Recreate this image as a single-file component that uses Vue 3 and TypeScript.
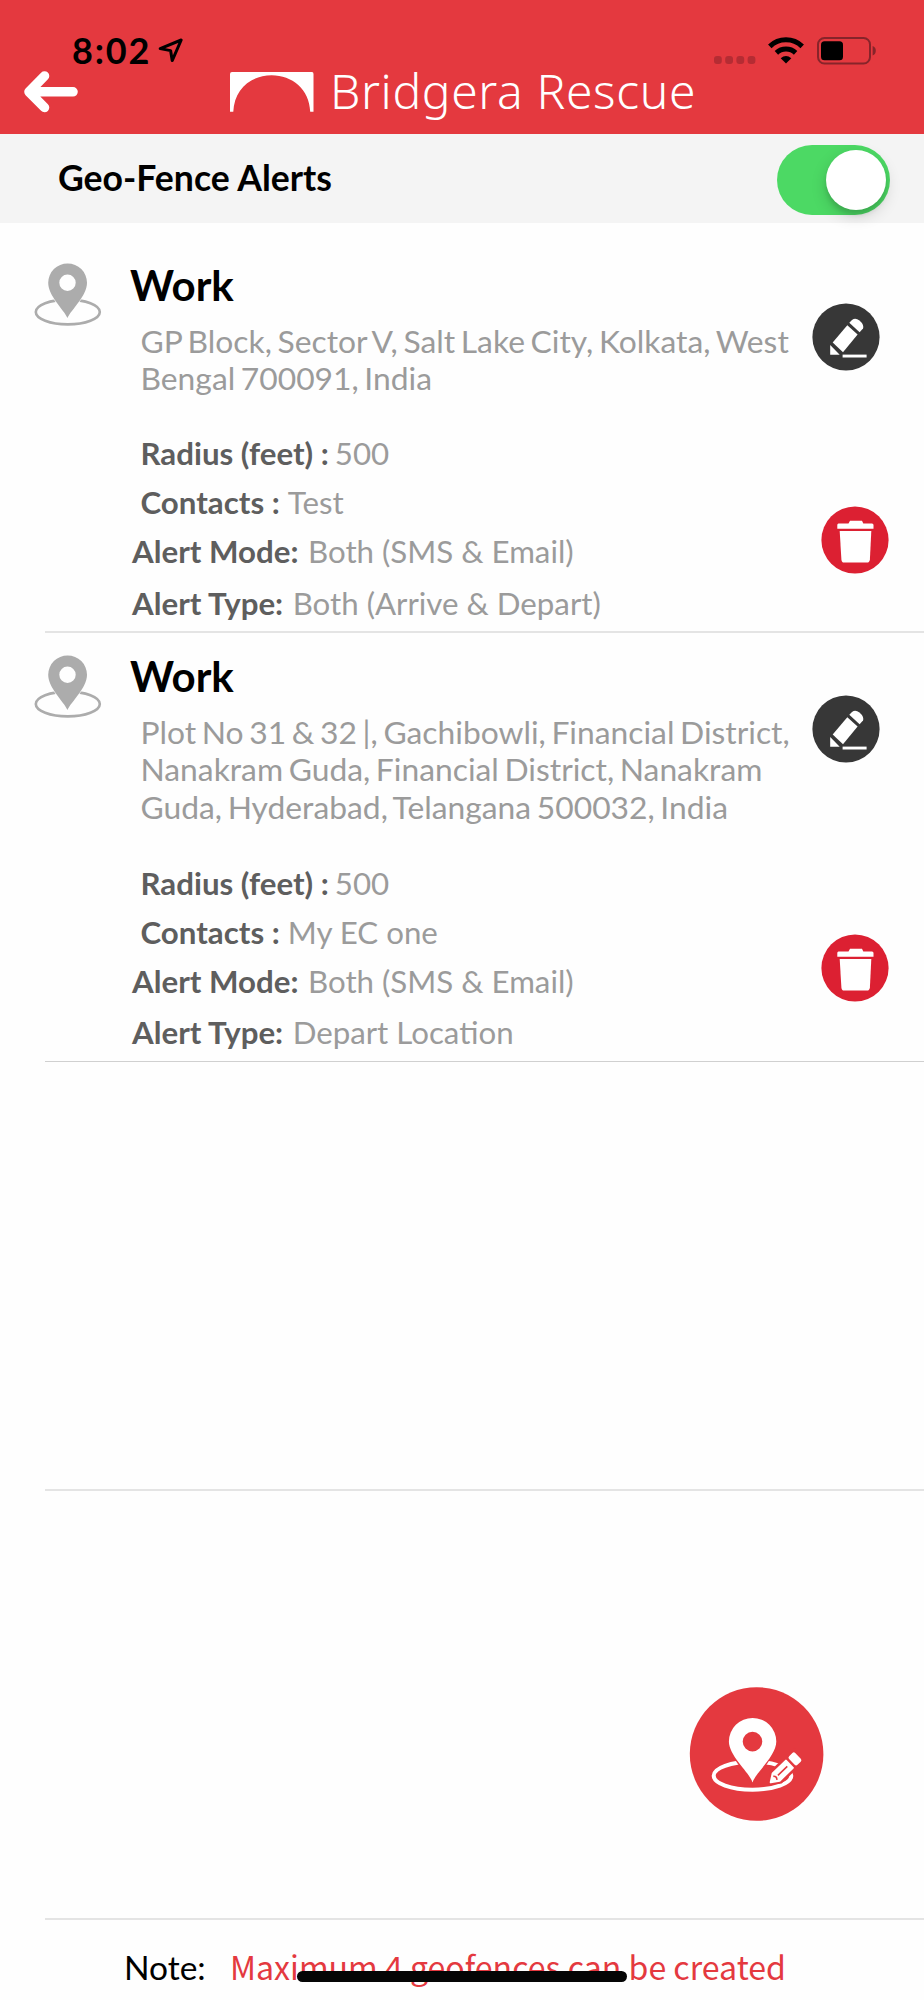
<script setup lang="ts">
import { ref } from 'vue'

interface Fence {
  name: string
  address: string[]
  radius: number
  contacts: string
  mode: string
  type: string
}

const alertsOn = ref(true)

const fences: Fence[] = [
  {
    name: 'Work',
    address: ['GP Block, Sector V, Salt Lake City, Kolkata, West', 'Bengal 700091, India'],
    radius: 500,
    contacts: 'Test',
    mode: 'Both (SMS & Email)',
    type: 'Both (Arrive & Depart)',
  },
  {
    name: 'Work',
    address: [
      'Plot No 31 & 32 |, Gachibowli, Financial District,',
      'Nanakram Guda, Financial District, Nanakram',
      'Guda, Hyderabad, Telangana 500032, India',
    ],
    radius: 500,
    contacts: 'My EC one',
    mode: 'Both (SMS & Email)',
    type: 'Depart Location',
  },
]
</script>

<template>
  <div class="screen">
    <header class="header">
      <div class="status">
        <span class="time">8:02</span>
        <svg class="loc" viewBox="0 0 26 25" width="26" height="25">
          <path d="M23.2 2 L2.2 10.6 L12.6 12.6 L14.2 22.6 Z" fill="none" stroke="#000" stroke-width="3" stroke-linejoin="round" />
        </svg>
        <svg class="dots" viewBox="0 0 42 8" width="42" height="8">
          <rect v-for="i in 4" :key="i" :x="(i - 1) * 11.2" y="0" width="7.8" height="8" rx="3" fill="#b52c33" />
        </svg>
        <svg class="wifi" viewBox="0 0 36 27" width="36" height="27">
          <path d="M1.8 9.4 A23.3 23.3 0 0 1 34.2 9.4" fill="none" stroke="#000" stroke-width="5" />
          <path d="M8.4 15.9 A14 14 0 0 1 27.6 15.9" fill="none" stroke="#000" stroke-width="5" />
          <path d="M18 26.4 L12.7 21.2 Q18 17 23.3 21.2 Z" fill="#000" />
        </svg>
        <svg class="battery" viewBox="0 0 60 28" width="60" height="28">
          <rect x="1" y="1" width="52" height="25.5" rx="6.5" fill="none" stroke="#87242a" stroke-width="2" />
          <path d="M55.6 9 Q58.8 10.2 58.8 13.7 Q58.8 17.2 55.6 18.4 Z" fill="#87242a" />
          <rect x="4" y="4.3" width="22" height="19" rx="3.5" fill="#000" />
        </svg>
      </div>
      <div class="nav">
        <svg class="back" viewBox="0 0 54 42" width="54" height="42">
          <path d="M20.5 5 L5 20.8 L20.5 36.5 M8 20.8 H49" fill="none" stroke="#fff" stroke-width="9.6" stroke-linecap="round" stroke-linejoin="round" />
        </svg>
        <svg class="bridge" viewBox="0 0 84 40" width="84" height="40">
          <path d="M2 0 H82 Q83.5 0 83.5 2 V39.8 H80.2 C79.5 17 62 3.2 41.7 3.2 C21 3.2 4.2 17 3.3 39.8 H0 V2 Q0 0 2 0 Z" fill="#fff" />
        </svg>
        <span class="brand">Bridgera Rescue</span>
      </div>
    </header>

    <section class="toggle-bar">
      <span class="toggle-label">Geo-Fence Alerts</span>
      <button class="switch" :class="{ on: alertsOn }" role="switch" :aria-checked="alertsOn" @click="alertsOn = !alertsOn">
        <span class="knob"></span>
      </button>
    </section>

    <main class="list">
      <article v-for="(f, n) in fences" :key="n" class="row" :class="'row-' + n">
        <svg class="pin" viewBox="0 0 68 64" width="68" height="64">
          <ellipse cx="33.8" cy="49" rx="32" ry="12.4" fill="none" stroke="#acacac" stroke-width="2.6" />
          <path d="M33.5 57 L17.6 33 H49.4 Z" fill="#fff" />
          <path fill-rule="evenodd" fill="#acacac" d="M33.5 55 C30 47 14.2 33 14.2 19.8 A19.4 19.4 0 0 1 53 19.8 C53 33 37 47 33.5 55 Z M33.5 11.6 A8.2 8.2 0 1 0 33.5 28 A8.2 8.2 0 1 0 33.5 11.6 Z" />
        </svg>
        <div class="info">
          <h2 class="name">{{ f.name }}</h2>
          <p class="address"><span v-for="line in f.address" :key="line" class="line">{{ line }}</span></p>
          <p class="field inset"><b>Radius (feet) :</b><span class="v-radius">{{ f.radius }}</span></p>
          <p class="field inset"><b>Contacts :</b><span class="v-contacts">{{ f.contacts }}</span></p>
          <p class="field"><b>Alert Mode:</b><span class="v-alert">{{ f.mode }}</span></p>
          <p class="field last"><b>Alert Type:</b><span class="v-alert">{{ f.type }}</span></p>
        </div>
        <div class="actions">
          <svg class="edit" viewBox="0 0 68 68" width="68" height="68">
            <circle cx="34" cy="34" r="33.6" fill="#373737" />
            <g fill="#fff">
              <path d="M35.3 22.2 L45.6 31.5 L31 49.2 L20.7 39.5 Z" />
              <path d="M37.3 19.7 L40 17 Q43.3 14.2 47.4 17.4 Q52.2 21.4 51 25.5 L47.6 29.2 Z" />
              <path d="M18.2 42 L27.7 51.7 H18.2 Z" />
              <rect x="30.6" y="51.6" width="24" height="2.9" />
            </g>
          </svg>
          <svg class="trash" viewBox="0 0 68 68" width="68" height="68">
            <circle cx="34" cy="34" r="33.6" fill="#dc2032" />
            <g fill="#fff">
              <path d="M17.5 17.5 H27.5 L29 14.8 H41 L42.3 17.5 H51 Q52.5 17.5 52.5 19 V22.8 H16.3 V19 Q16.3 17.5 17.5 17.5 Z" />
              <path d="M18.7 25 H50.3 L48.9 53.5 Q48.6 56.6 46 56.6 H23 Q20.6 56.6 20.4 53.5 Z" />
            </g>
          </svg>
        </div>
      </article>
      <div class="row empty"></div>
      <div class="row empty"></div>
    </main>

    <footer class="note">
      <span class="note-label">Note:</span>
      <span class="note-text">Maximum 4 geofences can be created</span>
    </footer>

    <button class="fab" aria-label="Add geofence">
      <svg viewBox="0 0 134 134" width="134" height="134">
        <circle cx="67.6" cy="67" r="66.8" fill="#e4393f" />
        <ellipse cx="63.5" cy="88.7" rx="38.8" ry="14" fill="none" stroke="#fff" stroke-width="4" />
        <path d="M63.5 99 L44.9 71 H81.9 Z" fill="#e4393f" />
        <path fill-rule="evenodd" fill="#fff" d="M63.5 95.5 C60.9 86 39.9 69 39.9 54.6 A23.7 23.7 0 0 1 87.3 54.6 C87.3 69 66.4 86 63.5 95.5 Z M63.5 44.8 A9.8 9.8 0 1 0 63.5 64.4 A9.8 9.8 0 1 0 63.5 44.8 Z" />
        <g transform="translate(81 96) rotate(-44)">
          <path d="M-3 0 L8 -8.5 H42 V8.5 H8 Z" fill="#e4393f" />
          <path d="M1 0 L8.5 -5 H27 V5 H8.5 Z" fill="#fff" stroke="#fff" stroke-width="2" stroke-linejoin="round" />
          <path d="M11 0 H24 M7 -2.5 Q10 0 7 2.5" stroke="#e4393f" stroke-width="1.6" fill="none" />
          <rect x="30.4" y="-6" width="8.5" height="12" rx="2" fill="#fff" />
        </g>
      </svg>
    </button>
    <div class="home-indicator"></div>
  </div>
</template>

<style>
body {
  margin: 0;
  background: #fff;
}
</style>

<style scoped>
.screen {
  position: relative;
  width: 924px;
  height: 2000px;
  overflow: hidden;
  display: flex;
  flex-direction: column;
  background: #fefefe;
  font-family: Lato, sans-serif;
  color: #000;
}
.header {
  flex: none;
  height: 134px;
  background: #e4393f;
}
.status {
  display: flex;
  height: 70px;
  box-sizing: border-box;
  padding: 37px 47px 0 72px;
  align-items: flex-start;
}
.time {
  font-size: 36px;
  line-height: 27px;
  font-weight: 700;
  letter-spacing: 1.8px;
  width: 86px;
  white-space: nowrap;
}
.loc { margin: 1px auto 0 0; }
.dots { margin: 19px 12px 0 0; }
.wifi { margin-right: 13px; }
.nav {
  display: flex;
  align-items: flex-start;
  height: 64px;
  padding-left: 24px;
}
.back { margin-top: 1px; }
.bridge { margin: 2.4px 0 0 152px; }
.brand {
  margin: -10.6px 0 0 16px;
  font-family: "Noto Sans", "Open Sans", sans-serif;
  font-weight: 300;
  font-size: 48px;
  line-height: 64px;
  letter-spacing: 0.65px;
  color: #fff;
  white-space: nowrap;
}
.toggle-bar {
  flex: none;
  height: 89px;
  display: flex;
  align-items: center;
  justify-content: space-between;
  padding: 0 34px 0 58px;
  background: #f4f4f4;
}
.toggle-label {
  margin-top: -3px;
  font-size: 35.6px;
  font-weight: 700;
}
.switch {
  width: 113.5px;
  height: 70px;
  margin-top: 2px;
  padding: 5px 4px;
  border: 0;
  border-radius: 35px;
  background: #ccc;
  display: flex;
}
.switch.on {
  background: #4cd964;
  justify-content: flex-end;
}
.knob {
  width: 60px;
  height: 60px;
  border-radius: 50%;
  background: #fff;
  box-shadow: 0 6px 16px rgba(0, 0, 0, 0.16), 0 5px 4px rgba(0, 0, 0, 0.1);
}
.list {
  flex: none;
  padding: 18px 0 0 45px;
}
.row {
  display: flex;
  box-sizing: border-box;
  border-bottom: 2px solid #e4e4e4;
}
.row-0 { height: 392px; }
.row-1 { height: 429px; border-bottom: 1px solid #d0d0d0; }
.empty { height: 429px; }
.pin {
  flex: none;
  margin: 22px 0 0 -11.4px;
}
.info {
  flex: 1;
  padding: 19px 0 0 28.4px;
  white-space: nowrap;
}
.name {
  margin: 0;
  font-size: 42px;
  line-height: 50px;
  font-weight: 700;
}
.row-1 .name { margin-top: -0.6px; }
.address {
  margin: 12.6px 0 31.6px 10.5px;
  font-size: 31.8px;
  line-height: 37.3px;
  word-spacing: -2.5px;
  color: #9b9b9b;
}
.row-1 .address { margin-bottom: 32.8px; }
.line { display: block; }
.field {
  margin: 0 0 0 2px;
  font-size: 31.25px;
  line-height: 49px;
  color: #9b9b9b;
}
.field b { color: #5e5e5e; }
.inset { margin-left: 10.5px; }
.last { padding-top: 2.8px; }
.v-radius { margin-left: 6px; }
.v-contacts { margin-left: 8px; }
.v-alert { margin-left: 9.5px; }
.actions {
  width: 112px;
  display: flex;
  flex-direction: column;
  justify-content: space-between;
  padding: 62px 0 57px;
  box-sizing: border-box;
}
.row-1 .actions { padding-bottom: 59px; }
.trash { margin-left: 8.6px; }
.note {
  display: flex;
  align-items: baseline;
  padding: 24px 0 0 124px;
  white-space: nowrap;
}
.note-label {
  width: 106px;
  font-size: 33.5px;
}
.note-text {
  font-family: "Noto Sans CJK SC", sans-serif;
  font-size: 32.1px;
  line-height: 44px;
  color: #e4393f;
}
.fab {
  position: absolute;
  left: 689px;
  top: 1687px;
  padding: 0;
  border: 0;
  background: none;
}
.fab svg {
  display: block;
  overflow: visible;
}
.home-indicator {
  position: absolute;
  left: 297px;
  top: 1971px;
  width: 330px;
  height: 11px;
  border-radius: 6px;
  background: #050505;
}
</style>
